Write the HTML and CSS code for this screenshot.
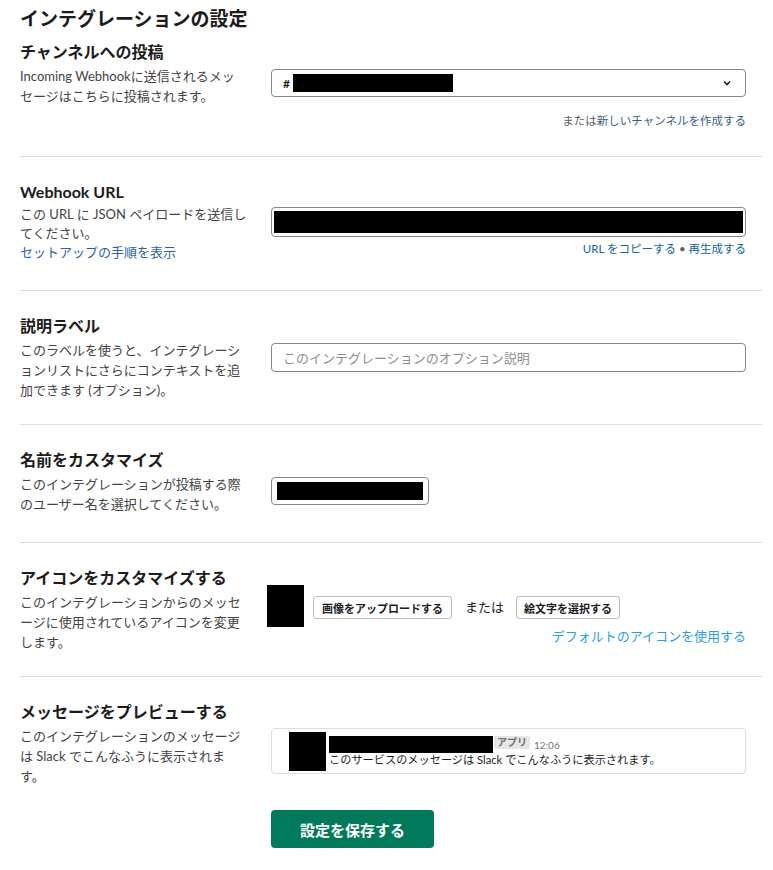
FILE: index.html
```html
<!DOCTYPE html>
<html lang="ja">
<head>
<meta charset="utf-8">
<title>インテグレーションの設定</title>
<link rel="stylesheet" href="styles.css">
</head>
<body>
<div class="page">
  <h1 class="title">インテグレーションの設定</h1>

  <section class="section section-first">
    <h2 class="heading">チャンネルへの投稿</h2>
    <p class="desc">Incoming Webhookに送信されるメッセージはこちらに投稿されます。</p>
    <div class="control">
      <div class="select">
        <span class="hash">#</span>
        <span class="redact redact-channel"></span>
        <svg class="chevron" width="8" height="6" viewBox="0 0 8 6"><path d="M1 1.5 L4 4.5 L7 1.5" fill="none" stroke="#1d1c1d" stroke-width="1.6"/></svg>
      </div>
      <div class="under under-far"><span class="muted">または</span><a class="link-muted">新しいチャンネルを作成する</a></div>
    </div>
  </section>

  <section class="section">
    <h2 class="heading">Webhook URL</h2>
    <p class="desc desc-tight">この URL に JSON ペイロードを送信してください。<br><a class="link">セットアップの手順を表示</a></p>
    <div class="control control-tight">
      <div class="input input-url"><span class="redact redact-url"></span></div>
      <div class="under"><a class="link">URL をコピーする</a> <span class="bullet">•</span> <a class="link">再生成する</a></div>
    </div>
  </section>

  <section class="section">
    <h2 class="heading">説明ラベル</h2>
    <p class="desc">このラベルを使うと、インテグレーションリストにさらにコンテキストを追加できます (オプション)。</p>
    <div class="control">
      <div class="input input-text"><span class="placeholder">このインテグレーションのオプション説明</span></div>
    </div>
  </section>

  <section class="section section-extra">
    <h2 class="heading">名前をカスタマイズ</h2>
    <p class="desc">このインテグレーションが投稿する際のユーザー名を選択してください。</p>
    <div class="control">
      <div class="input input-name"><span class="redact redact-name"></span></div>
    </div>
  </section>

  <section class="section">
    <h2 class="heading">アイコンをカスタマイズする</h2>
    <p class="desc">このインテグレーションからのメッセージに使用されているアイコンを変更します。</p>
    <div class="control control-icon">
      <div class="icon-row">
        <span class="redact redact-icon"></span>
        <button class="btn">画像をアップロードする</button>
        <span class="or">または</span>
        <button class="btn">絵文字を選択する</button>
      </div>
      <div class="under under-icon"><a class="link-light">デフォルトのアイコンを使用する</a></div>
    </div>
  </section>

  <section class="section section-last">
    <h2 class="heading">メッセージをプレビューする</h2>
    <p class="desc">このインテグレーションのメッセージは Slack でこんなふうに表示されます。</p>
    <div class="control control-preview">
      <div class="preview">
        <span class="redact redact-avatar"></span>
        <div class="msg">
          <div class="msg-head">
            <span class="redact redact-user"></span>
            <span class="badge">アプリ</span>
            <span class="time">12:06</span>
          </div>
          <div class="msg-text">このサービスのメッセージは Slack でこんなふうに表示されます。</div>
        </div>
      </div>
    </div>
  </section>

  <div class="save-row">
    <button class="save">設定を保存する</button>
  </div>
</div>
</body>
</html>
```

FILE: styles.css
```css
* { box-sizing: border-box; }
html, body { margin: 0; padding: 0; background: #fff; }
body {
  font-family: Lato, "Noto Sans CJK JP", sans-serif;
  color: #1d1c1d;
}
.page {
  width: 742px;
  margin-left: 20px;
}
.title {
  margin: 7px 0 0;
  font-size: 19px;
  line-height: 24px;
  font-weight: 700;
}
.section {
  display: grid;
  grid-template-columns: 227px 475px;
  grid-template-rows: auto auto;
  column-gap: 24px;
  row-gap: 4px;
  padding: 25px 0 24px;
  border-bottom: 1px solid #dddddd;
}
.section-first { padding-top: 11px; padding-bottom: 26px; }
.section-extra { padding-bottom: 28px; }
.section-last { border-bottom: none; }
.heading {
  grid-column: 1;
  grid-row: 1;
  margin: 0;
  font-size: 16px;
  line-height: 20px;
  font-weight: 700;
}
.desc {
  grid-column: 1;
  grid-row: 2;
  margin: 0;
  font-size: 13px;
  line-height: 20px;
  color: #454245;
}
.desc-tight { line-height: 19px; margin-top: -1px; padding-bottom: 4px; }
.control {
  grid-column: 2;
  grid-row: 2;
  margin-top: 3px;
}
.control-tight { margin-top: 1px; }
.control-icon { margin-top: -7px; }
.control-preview { margin-top: 2px; }

.select {
  display: flex;
  align-items: center;
  height: 28px;
  border: 1px solid #868686;
  border-radius: 4px;
  padding: 0 14px 0 11px;
}
.hash { font-size: 12px; font-weight: 700; width: 10px; }
.chevron { margin-left: auto; }
.redact { display: block; background: #000; }
.redact-channel { width: 160px; height: 18px; }
.redact-url { width: 470px; height: 22px; }
.redact-name { width: 148px; height: 18px; }
.redact-icon { width: 37px; height: 42px; margin-left: -4px; }
.redact-avatar { width: 37px; height: 39px; flex: none; }
.redact-user { width: 164px; height: 17px; }

.input {
  display: flex;
  align-items: center;
  border: 1px solid #868686;
  border-radius: 4px;
}
.input-url { height: 30px; padding: 0 2px; }
.input-text { height: 29px; padding: 0 11px; }
.input-name { width: 158px; height: 28px; padding: 0 5px; }
.placeholder { font-size: 13px; color: #8d8d8d; }

.under {
  margin-top: 3px;
  text-align: right;
  font-size: 11.5px;
  line-height: 18px;
}
.under-far { margin-top: 15px; }
.under-icon { margin-top: 0; font-size: 13px; }
.muted { color: #5a5a62; }
.link-muted { color: #3d5f85; }
.link { color: #1264a3; font-size: inherit; }
.desc .link { color: #2b63a0; }
.bullet { color: #616061; }
.link-light { color: #2a9fd8; }

.icon-row {
  display: flex;
  align-items: center;
  gap: 9px;
}
.btn {
  font-family: Lato, "Noto Sans CJK JP", sans-serif;
  font-size: 11px;
  font-weight: 700;
  color: #1d1c1d;
  background: #fff;
  border: 1px solid #bdbdbd;
  border-radius: 3px;
  height: 23px;
  padding: 0 8px;
  margin-top: 3px;
}
.btn:last-child { padding: 0 7px; }
.or {
  font-size: 13px;
  color: #1d1c1d;
  margin: 0 3px 0 4px;
}

.preview {
  display: flex;
  height: 46px;
  border: 1px solid #dddddd;
  border-radius: 4px;
  padding: 3px 0 0 17px;
}
.msg { margin-left: 3px; padding-top: 4px; }
.msg-head { display: flex; align-items: flex-start; height: 17px; }
.badge {
  margin-left: 1px;
  padding: 0 3px;
  height: 13px;
  line-height: 13px;
  font-size: 10px;
  font-weight: 700;
  color: #717274;
  background: #e6e6e6;
  border-radius: 2px;
}
.time {
  margin-left: 4px;
  margin-top: 3px;
  font-size: 10px;
  line-height: 12px;
  color: #717274;
}
.msg-text {
  font-size: 11.2px;
  line-height: 14px;
  color: #1d1c1d;
}

.save-row {
  padding-left: 251px;
}
.save {
  width: 163px;
  height: 38px;
  border: none;
  border-radius: 4px;
  background: #007a5a;
  color: #fff;
  font-family: Lato, "Noto Sans CJK JP", sans-serif;
  font-size: 15px;
  font-weight: 700;
}
```
